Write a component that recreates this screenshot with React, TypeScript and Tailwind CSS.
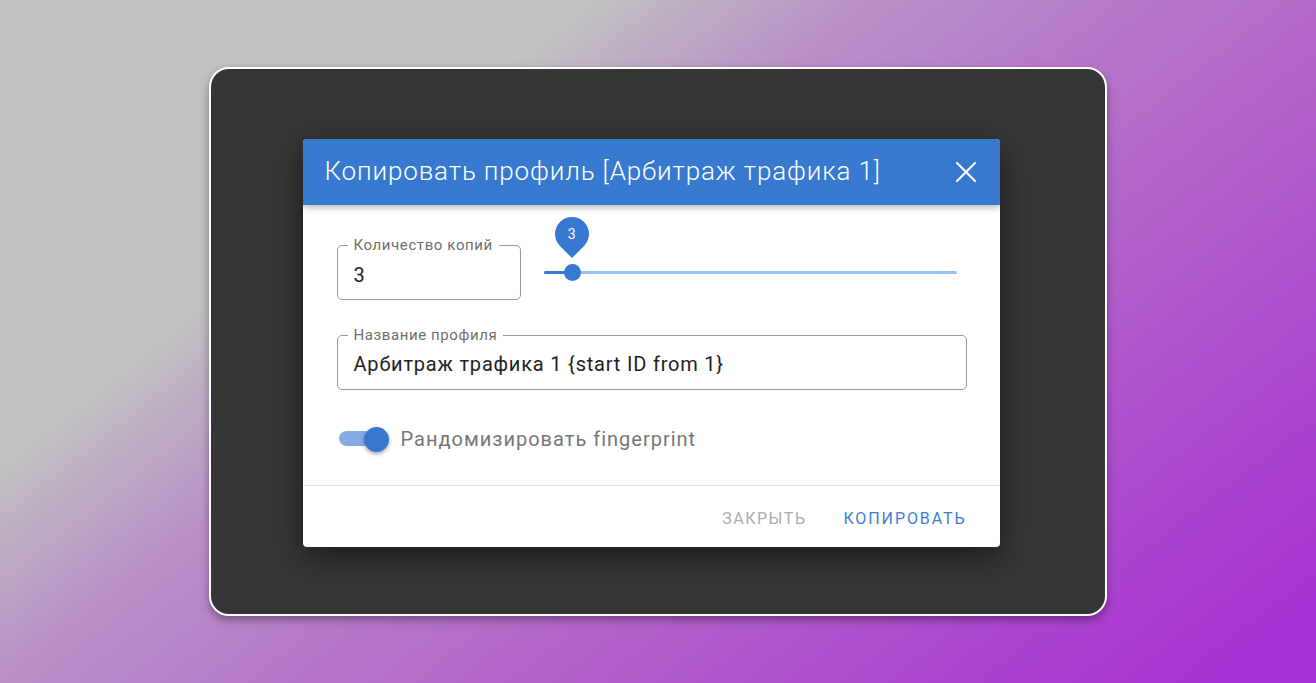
import React from "react";

export default function App() {
  return (
    <div
      className="w-[1316px] h-[683px] flex items-center justify-center overflow-hidden"
      style={{
        background:
          "linear-gradient(142deg, #c1c1c1 27%, #b98fc8 40%, #b46ac9 60%, #a731d2 95%)",
        fontFamily: "Roboto, 'Noto Sans', sans-serif",
      }}
    >
      <div className="w-[898px] h-[549px] rounded-[20px] border-2 border-white bg-[#363636] shadow-[0_4px_8px_rgba(0,0,0,0.35)] flex items-center justify-center">
        <div className="w-[697px] h-[408px] bg-white rounded-[4px] overflow-hidden flex flex-col shadow-[0_10px_30px_rgba(0,0,0,0.5)] mt-[2px] mr-[14px]">
          <div className="h-[66px] shrink-0 bg-[#3879d0] flex items-center justify-between pl-[22px] pr-[22px] shadow-[0_3px_6px_rgba(0,0,0,0.25)] relative z-10">
            <span className="text-white text-[26px] font-light tracking-[0.85px]">
              Копировать профиль [Арбитраж трафика 1]
            </span>
            <svg width="24" height="24" viewBox="0 0 24 24">
              <path d="M3 3 L21 21 M21 3 L3 21" stroke="white" strokeWidth="2.2" strokeLinecap="round" />
            </svg>
          </div>
          <div className="flex-1 flex flex-col px-[34px] pt-[40px]">
            <div className="flex items-start">
              <div className="relative w-[184px] h-[55px] border border-[#9a9a9a] rounded-[5px] flex items-center pl-[16px] pt-[2px]">
                <span className="absolute left-[10px] top-[-11px] bg-white px-[6px] text-[15px] tracking-[0.6px] text-[#6f6f6f] leading-[20px]">
                  Количество копий
                </span>
                <span className="text-[20px] text-[#222] mt-[3px]">3</span>
              </div>
              <div className="relative ml-[23px] w-[413px] h-[55px]">
                <div className="absolute left-0 right-0 top-[26px] h-[3px] bg-[#96c3f6] rounded" />
                <div className="absolute left-0 w-[28px] top-[26px] h-[3px] bg-[#3878d0] rounded" />
                <div className="absolute left-[20px] top-[19px] w-[17px] h-[17px] rounded-full bg-[#3878d0]" />
                <div className="absolute left-[11px] top-[-28px] w-[34px] h-[34px] rounded-full rounded-br-none bg-[#3878d0] rotate-45 flex items-center justify-center">
                  <span className="-rotate-45 text-white text-[14px]">3</span>
                </div>
              </div>
            </div>
            <div className="relative mt-[35px] w-[630px] h-[55px] border border-[#9a9a9a] rounded-[5px] flex items-center pl-[16px]">
              <span className="absolute left-[10px] top-[-11px] bg-white px-[6px] text-[15px] tracking-[0.6px] text-[#6f6f6f] leading-[20px]">
                Название профиля
              </span>
              <span className="text-[20px] tracking-[0.8px] text-[#222] mt-[3px]">
                Арбитраж трафика 1 {"{start ID from 1}"}
              </span>
            </div>
            <div className="flex items-center mt-[34px] ml-[2px]">
              <div className="relative w-[50px] h-[26px] flex items-center">
                <div className="w-[48px] h-[15px] rounded-full bg-[#89abe3]" />
                <div className="absolute right-0 top-[1px] w-[25px] h-[25px] rounded-full bg-[#3878d0] shadow-[0_2px_4px_rgba(0,0,0,0.35)]" />
              </div>
              <span className="ml-[12px] text-[20px] tracking-[1px] text-[#777]">
                Рандомизировать fingerprint
              </span>
            </div>
          </div>
          <div className="h-[62px] shrink-0 border-t border-[#e2e2e2] flex items-center justify-end pr-[33px] gap-[37px] pt-[6px]">
            <span className="text-[16px] tracking-[1.5px] text-[#acacac]">ЗАКРЫТЬ</span>
            <span className="text-[16px] tracking-[1.9px] text-[#3d7dd3]">КОПИРОВАТЬ</span>
          </div>
        </div>
      </div>
    </div>
  );
}
